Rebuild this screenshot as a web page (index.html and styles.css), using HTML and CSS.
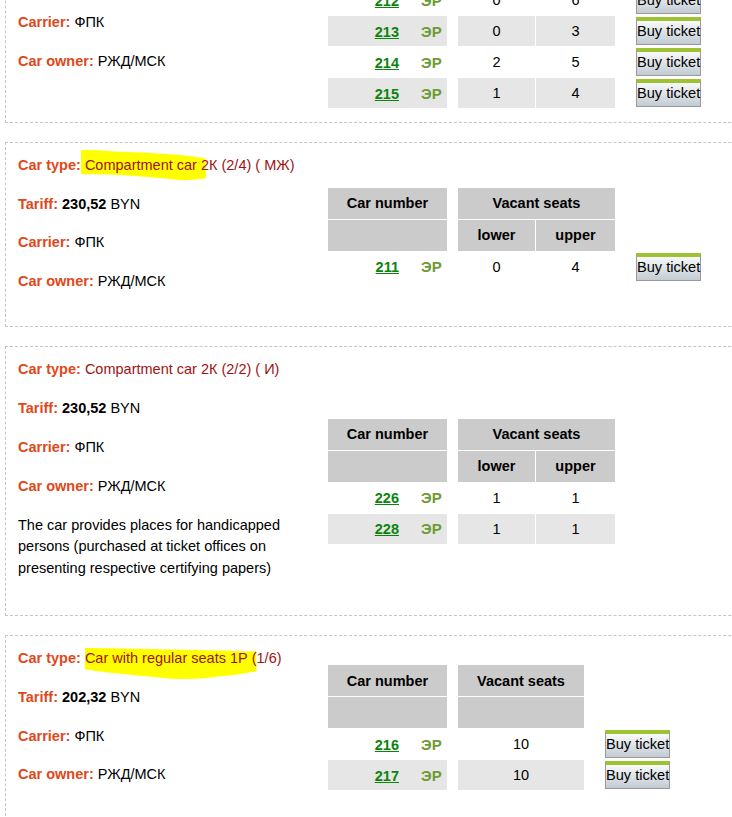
FILE: index.html
```html
<!DOCTYPE html>
<html lang="en">
<head>
    <meta charset="UTF-8">
    <meta name="viewport" content="width=device-width, initial-scale=1.0">
    <title>Cars and seats</title>
    <link rel="stylesheet" href="styles.css">
</head>
<body>
    <div class="page">

        <div class="car-block">
            <div class="info">
                <p><span class="label">Car type:</span> <span class="type">Compartment car 2К (2/4) ( М)</span></p>
                <p><span class="label">Tariff:</span> <b>230,52</b> BYN</p>
                <p><span class="label">Carrier:</span> ФПК</p>
                <p><span class="label">Car owner:</span> РЖД/МСК</p>
            </div>
            <table class="seats">
                <tr>
                    <th class="car-col">Car number</th>
                    <th class="gap"></th>
                    <th colspan="2">Vacant seats</th>
                    <th class="gap gap-wide"></th>
                    <th class="gap btn-col"></th>
                </tr>
                <tr>
                    <th></th>
                    <th class="gap"></th>
                    <th class="low-col">lower</th>
                    <th class="up-col">upper</th>
                    <th class="gap"></th>
                    <th class="gap"></th>
                </tr>
                <tr>
                    <td class="car"><a class="num" href="#">212</a><span class="er">ЭР</span></td>
                    <td class="gap"></td>
                    <td>0</td>
                    <td>6</td>
                    <td class="gap"></td>
                    <td class="gap"><button class="buy">Buy ticket</button></td>
                </tr>
                <tr class="alt">
                    <td class="car"><a class="num" href="#">213</a><span class="er">ЭР</span></td>
                    <td class="gap"></td>
                    <td>0</td>
                    <td>3</td>
                    <td class="gap"></td>
                    <td class="gap"><button class="buy">Buy ticket</button></td>
                </tr>
                <tr>
                    <td class="car"><a class="num" href="#">214</a><span class="er">ЭР</span></td>
                    <td class="gap"></td>
                    <td>2</td>
                    <td>5</td>
                    <td class="gap"></td>
                    <td class="gap"><button class="buy">Buy ticket</button></td>
                </tr>
                <tr class="alt">
                    <td class="car"><a class="num" href="#">215</a><span class="er">ЭР</span></td>
                    <td class="gap"></td>
                    <td>1</td>
                    <td>4</td>
                    <td class="gap"></td>
                    <td class="gap"><button class="buy">Buy ticket</button></td>
                </tr>
            </table>
        </div>

        <div class="car-block">
            <svg class="marker marker-one" width="126" height="31" viewBox="0 0 126 31">
                <path d="M0 0 C14 0 28 1 39 1.7 C60 2.5 74 3 86 4 C100 5 114 6.5 124.5 8.3 L125 28.3 C116 29.5 106 30.5 99 30 C80 28 58 26 39 25 C24 24.5 10 24.5 0 24.3 Z" fill="#ffff00"/>
            </svg>
            <div class="info">
                <p><span class="label">Car type:</span> <span class="type">Compartment car 2К (2/4) ( МЖ)</span></p>
                <p><span class="label">Tariff:</span> <b>230,52</b> BYN</p>
                <p><span class="label">Carrier:</span> ФПК</p>
                <p><span class="label">Car owner:</span> РЖД/МСК</p>
            </div>
            <table class="seats">
                <tr>
                    <th class="car-col">Car number</th>
                    <th class="gap"></th>
                    <th colspan="2">Vacant seats</th>
                    <th class="gap gap-wide"></th>
                    <th class="gap btn-col"></th>
                </tr>
                <tr>
                    <th></th>
                    <th class="gap"></th>
                    <th class="low-col">lower</th>
                    <th class="up-col">upper</th>
                    <th class="gap"></th>
                    <th class="gap"></th>
                </tr>
                <tr>
                    <td class="car"><a class="num" href="#">211</a><span class="er">ЭР</span></td>
                    <td class="gap"></td>
                    <td>0</td>
                    <td>4</td>
                    <td class="gap"></td>
                    <td class="gap"><button class="buy">Buy ticket</button></td>
                </tr>
            </table>
        </div>

        <div class="car-block">
            <div class="info">
                <p><span class="label">Car type:</span> <span class="type">Compartment car 2К (2/2) ( И)</span></p>
                <p><span class="label">Tariff:</span> <b>230,52</b> BYN</p>
                <p><span class="label">Carrier:</span> ФПК</p>
                <p><span class="label">Car owner:</span> РЖД/МСК</p>
                <p class="note">The car provides places for handicapped persons (purchased at ticket offices on presenting respective certifying papers)</p>
            </div>
            <table class="seats">
                <tr>
                    <th class="car-col">Car number</th>
                    <th class="gap"></th>
                    <th colspan="2">Vacant seats</th>
                </tr>
                <tr>
                    <th></th>
                    <th class="gap"></th>
                    <th class="low-col">lower</th>
                    <th class="up-col">upper</th>
                </tr>
                <tr>
                    <td class="car"><a class="num" href="#">226</a><span class="er">ЭР</span></td>
                    <td class="gap"></td>
                    <td>1</td>
                    <td>1</td>
                </tr>
                <tr class="alt">
                    <td class="car"><a class="num" href="#">228</a><span class="er">ЭР</span></td>
                    <td class="gap"></td>
                    <td>1</td>
                    <td>1</td>
                </tr>
            </table>
        </div>

        <div class="car-block">
            <svg class="marker marker-two" width="172" height="32" viewBox="0 0 172 32">
                <path d="M0 0 C40 0.5 100 1.5 171 3.5 L171.5 23.5 C162 25 154 26.5 148 27 C128 29.5 108 31.5 92 31 C70 29.5 45 26.5 25 24.7 C14 23.5 6 22.3 0 21.3 Z" fill="#ffff00"/>
            </svg>
            <div class="info">
                <p><span class="label">Car type:</span> <span class="type">Car with regular seats 1Р (1/6)</span></p>
                <p><span class="label">Tariff:</span> <b>202,32</b> BYN</p>
                <p><span class="label">Carrier:</span> ФПК</p>
                <p><span class="label">Car owner:</span> РЖД/МСК</p>
            </div>
            <table class="seats">
                <tr>
                    <th class="car-col">Car number</th>
                    <th class="gap"></th>
                    <th class="all-col">Vacant seats</th>
                    <th class="gap gap-wide"></th>
                    <th class="gap btn-col"></th>
                </tr>
                <tr>
                    <th></th>
                    <th class="gap"></th>
                    <th></th>
                    <th class="gap"></th>
                    <th class="gap"></th>
                </tr>
                <tr>
                    <td class="car"><a class="num" href="#">216</a><span class="er">ЭР</span></td>
                    <td class="gap"></td>
                    <td>10</td>
                    <td class="gap"></td>
                    <td class="gap"><button class="buy">Buy ticket</button></td>
                </tr>
                <tr class="alt">
                    <td class="car"><a class="num" href="#">217</a><span class="er">ЭР</span></td>
                    <td class="gap"></td>
                    <td>10</td>
                    <td class="gap"></td>
                    <td class="gap"><button class="buy">Buy ticket</button></td>
                </tr>
            </table>
        </div>

    </div>
</body>
</html>
```

FILE: styles.css
```css
html,
body {
    overflow: hidden;
}
body {
    margin: 0;
    background: #fff;
    color: #000;
    font-family: "Liberation Sans", Arial, sans-serif;
    font-size: 14.5px;
}
.page {
    margin-top: -94px; /* the list is scrolled a little */
    padding-left: 5px;
}
.car-block {
    position: relative;
    z-index: 0;
    width: 780px;
    border: 1px dashed #c6c6c6;
    padding: 13px 12px 13px;
    margin-bottom: 19px;
    display: flex;
    align-items: center;
}
.marker {
    position: absolute;
    z-index: -1;
}
.marker-one {
    left: 75px;
    top: 7px;
}
.marker-two {
    left: 79px;
    top: 12px;
}
.info {
    width: 292px;
    flex: none;
    padding-bottom: 2.7px;
}
.info p {
    margin: 0 0 20.7px;
    line-height: 18px;
}
.info p.note {
    line-height: 21.2px;
}
.label {
    font-weight: bold;
    color: #e0481a;
}
.type {
    color: #a01212;
}
.seats {
    margin-left: 17px;
    border-collapse: separate;
    border-spacing: 1px;
    flex: none;
}
.seats th {
    background-color: #cbcbcb;
    height: 31px;
    padding: 0;
    font-weight: bold;
    text-align: center;
}
.seats td {
    height: 30px;
    padding: 0;
    text-align: center;
    vertical-align: middle;
}
.seats tr.alt td {
    background-color: #e6e6e6;
}
.seats th.gap,
.seats td.gap,
.seats tr.alt td.gap {
    background: none;
}
.car-col {
    width: 119px;
}
.gap {
    width: 9px;
}
.gap-wide {
    width: 19px;
}
.btn-col {
    width: 65px;
}
.low-col {
    width: 77px;
}
.up-col {
    width: 79px;
}
.all-col {
    width: 126px;
}
.seats td.car {
    text-align: left;
    white-space: nowrap;
}
.num {
    display: inline-block;
    width: 71px;
    text-align: right;
    font-weight: bold;
    color: #0b840b;
    text-decoration: underline;
}
.er {
    margin-left: 22px;
    font-size: 15px;
    font-weight: bold;
    color: #6e9b34;
}
.buy {
    display: block;
    box-sizing: border-box;
    width: 65px;
    height: 28px;
    padding: 0 0 3px;
    border: 1px solid #9a9a9a;
    border-top: 4px solid #9dc232;
    background: linear-gradient(#f8f9fa, #c2cbd3);
    color: #000;
    font-family: "Liberation Sans", Arial, sans-serif;
    font-size: 14.6px;
    white-space: nowrap;
    cursor: pointer;
}
```
